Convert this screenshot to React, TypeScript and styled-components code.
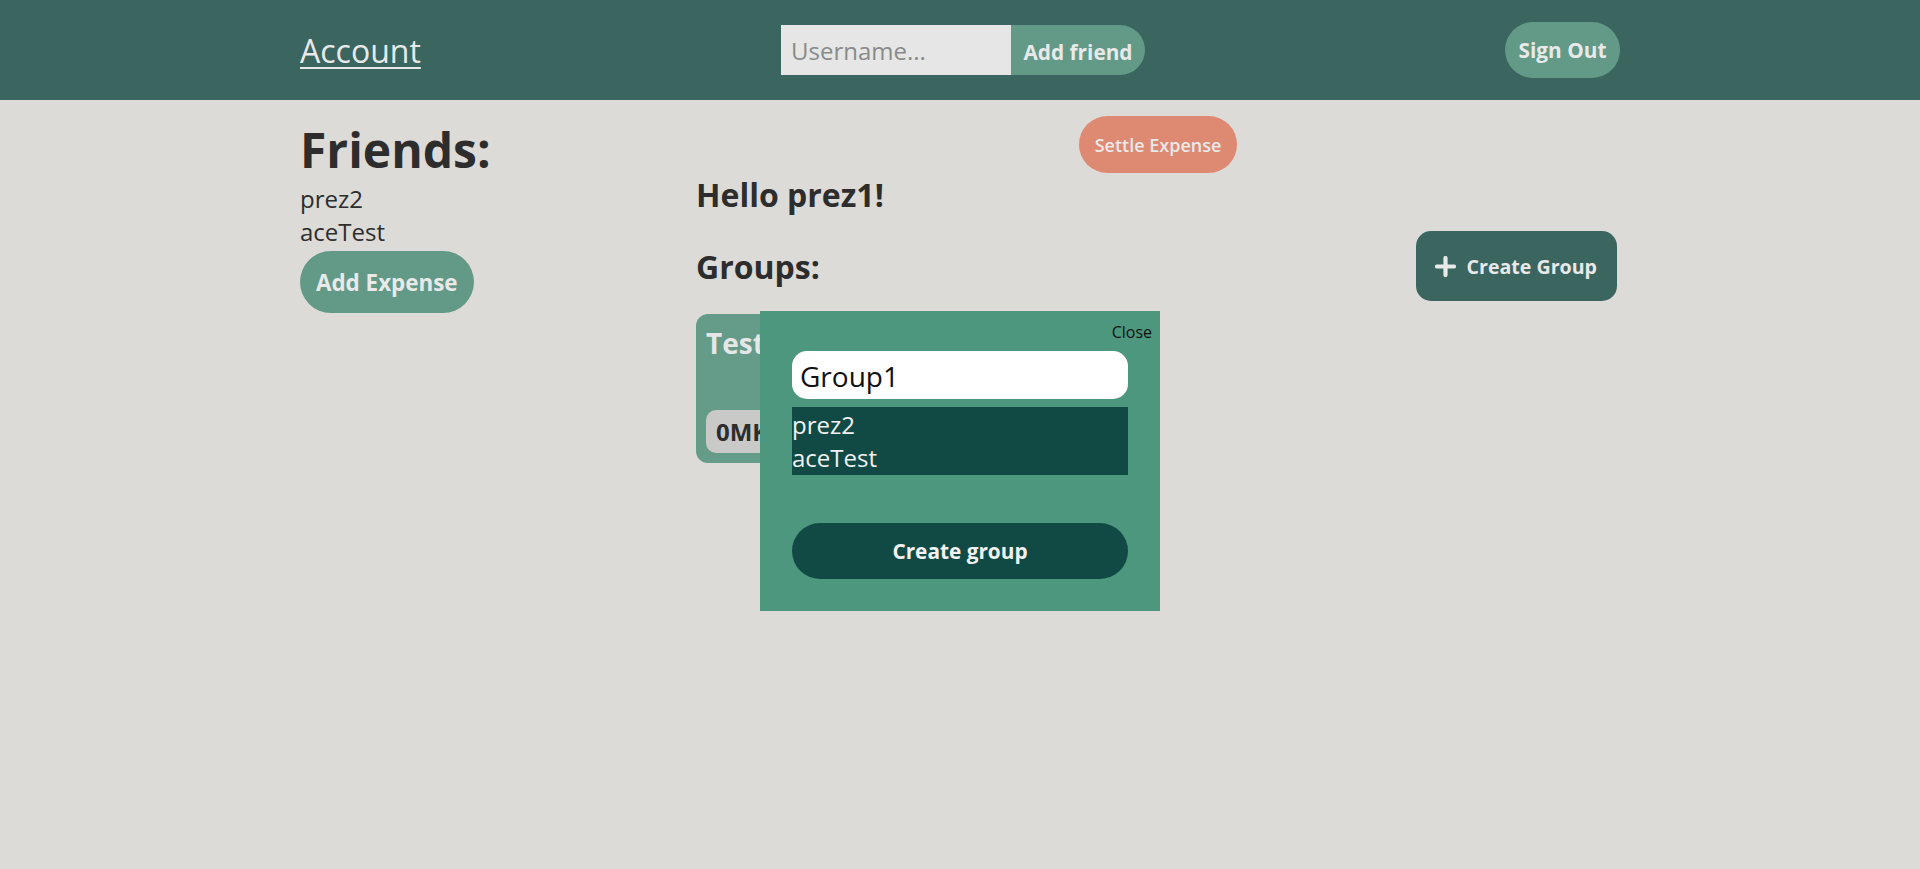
import React from 'react';
import styled, { createGlobalStyle } from 'styled-components';

const GlobalStyle = createGlobalStyle`
  body {
    margin: 0;
    background: #dcdbd7;
    font-family: 'Open Sans', 'Noto Sans', sans-serif;
    color: #2d2d2d;
  }
`;

const Header = styled.header`
  background: #3b6660;
  height: 100px;
`;

const HeaderInner = styled.div`
  width: 1320px;
  height: 100%;
  margin: 0 auto;
  display: grid;
  grid-template-columns: 1fr auto 1fr;
  align-items: center;
`;

const AccountLink = styled.a`
  justify-self: start;
  color: #e9e9e9;
  font-size: 32px;
  text-decoration: underline;
  text-underline-offset: 4px;
  text-decoration-thickness: 2px;
`;

const FriendForm = styled.form`
  display: flex;
  height: 50px;
  margin-left: 6px;
`;

const UsernameInput = styled.input`
  width: 230px;
  box-sizing: border-box;
  border: none;
  outline: none;
  background: #e6e6e6;
  font-family: inherit;
  font-size: 24px;
  padding: 0 10px;
  &::placeholder {
    color: #8a8a8a;
  }
`;

const PillButton = styled.button<{ $tone?: 'green' | 'salmon' | 'dark' }>`
  border: none;
  font-family: inherit;
  font-weight: 700;
  color: #e9e9e9;
  cursor: pointer;
  background: ${(p) =>
    p.$tone === 'salmon' ? '#de8a73' : p.$tone === 'dark' ? '#114a45' : '#629a87'};
`;

const AddFriendButton = styled(PillButton)`
  width: 134px;
  font-size: 20.8px;
  border-radius: 0 25px 25px 0;
  padding: 4px 0 0;
`;

const SignOutButton = styled(PillButton)`
  justify-self: end;
  width: 115px;
  height: 56px;
  border-radius: 28px;
  font-size: 20.8px;
`;

const Page = styled.main`
  width: 1320px;
  margin: 0 auto;
  display: grid;
  grid-template-columns: 396px 1fr;
`;

const FriendsColumn = styled.section`
  display: flex;
  flex-direction: column;
  align-items: flex-start;
`;

const FriendsTitle = styled.h1`
  font-size: 48px;
  font-weight: 700;
  margin: 17px 0 0;
`;

const FriendName = styled.div`
  font-size: 24px;
  line-height: 33px;
`;

const AddExpenseButton = styled(PillButton)`
  margin-top: 3px;
  height: 62px;
  padding: 0 16px;
  border-radius: 31px;
  font-size: 22.4px;
`;

const MainColumn = styled.section`
  display: flex;
  flex-direction: column;
`;

const SettleRow = styled.div`
  display: flex;
  justify-content: center;
  margin-top: 16px;
`;

const SettleButton = styled(PillButton)`
  height: 57px;
  width: 158px;
  border-radius: 29px;
  font-size: 18px;
  font-weight: 600;
`;

const Greeting = styled.h2`
  font-size: 32px;
  font-weight: 700;
  margin: 0;
`;

const GroupsRow = styled.div`
  display: flex;
  align-items: center;
  justify-content: space-between;
  margin-top: 15px;
`;

const CreateGroupButton = styled.button`
  display: flex;
  align-items: center;
  gap: 11px;
  height: 70px;
  padding: 0 20px 0 19px;
  margin-right: 3px;
  border: none;
  border-radius: 15px;
  background: #3b6660;
  color: #e9e9e9;
  font-family: inherit;
  font-size: 19.6px;
  font-weight: 700;
`;

const GroupGrid = styled.div`
  display: flex;
  gap: 16px;
  margin-top: 13px;
`;

const GroupCard = styled.div`
  width: 240px;
  height: 149px;
  box-sizing: border-box;
  padding: 10px;
  border-radius: 12px;
  background: #659b89;
  display: flex;
  flex-direction: column;
  justify-content: space-between;
  align-items: flex-start;
`;

const GroupName = styled.div`
  color: #e6e6e6;
  font-size: 28px;
  font-weight: 700;
`;

const Balance = styled.div`
  background: #c9c9c7;
  border-radius: 10px;
  height: 43px;
  padding: 0 10px;
  display: flex;
  align-items: center;
  font-size: 24px;
  font-weight: 700;
  color: #2d2d2d;
`;

const Modal = styled.div`
  position: fixed;
  top: 311px;
  left: 50%;
  transform: translateX(-50%);
  width: 400px;
  height: 300px;
  box-sizing: border-box;
  padding: 40px 32px 32px;
  background: #4c977e;
  display: flex;
  flex-direction: column;
`;

const CloseButton = styled.button`
  position: absolute;
  top: 10px;
  right: 8px;
  border: none;
  background: none;
  padding: 0;
  font-family: inherit;
  font-size: 16px;
  color: #111;
  cursor: pointer;
`;

const GroupNameInput = styled.input`
  height: 48px;
  box-sizing: border-box;
  border: none;
  outline: none;
  border-radius: 15px;
  background: #fff;
  padding: 2px 8px 0;
  font-family: inherit;
  font-size: 28px;
  color: #111;
  caret-color: #111;
`;

const MemberList = styled.ul`
  list-style: none;
  margin: 8px 0 0;
  padding: 1px 0;
  background: #114a45;
`;

const Member = styled.li`
  color: #f2f2f2;
  font-size: 24px;
  line-height: 33px;
`;

const SubmitButton = styled(PillButton)`
  margin-top: auto;
  height: 56px;
  border-radius: 28px;
  font-size: 20.8px;
  color: #f2f2f2;
`;

const PlusIcon = () => (
  <svg width="21" height="21" viewBox="0 0 21 21">
    <path d="M10.5 2v17M2 10.5h17" stroke="#e9e9e9" strokeWidth="4.2" strokeLinecap="round" />
  </svg>
);

const friends = ['prez2', 'aceTest'];

export default function App() {
  return (
    <>
      <GlobalStyle />
      <Header>
        <HeaderInner>
          <AccountLink href="#">Account</AccountLink>
          <FriendForm onSubmit={(e) => e.preventDefault()}>
            <UsernameInput placeholder="Username..." />
            <AddFriendButton type="submit">Add friend</AddFriendButton>
          </FriendForm>
          <SignOutButton>Sign Out</SignOutButton>
        </HeaderInner>
      </Header>
      <Page>
        <FriendsColumn>
          <FriendsTitle>Friends:</FriendsTitle>
          {friends.map((f) => (
            <FriendName key={f}>{f}</FriendName>
          ))}
          <AddExpenseButton>Add Expense</AddExpenseButton>
        </FriendsColumn>
        <MainColumn>
          <SettleRow>
            <SettleButton $tone="salmon">Settle Expense</SettleButton>
          </SettleRow>
          <Greeting>Hello prez1!</Greeting>
          <GroupsRow>
            <Greeting>Groups:</Greeting>
            <CreateGroupButton>
              <PlusIcon />
              Create Group
            </CreateGroupButton>
          </GroupsRow>
          <GroupGrid>
            <GroupCard>
              <GroupName>Test</GroupName>
              <Balance>0MKD</Balance>
            </GroupCard>
          </GroupGrid>
        </MainColumn>
      </Page>
      <Modal>
        <CloseButton>Close</CloseButton>
        <GroupNameInput defaultValue="Group1" autoFocus />
        <MemberList>
          {friends.map((f) => (
            <Member key={f}>{f}</Member>
          ))}
        </MemberList>
        <SubmitButton $tone="dark">Create group</SubmitButton>
      </Modal>
    </>
  );
}
